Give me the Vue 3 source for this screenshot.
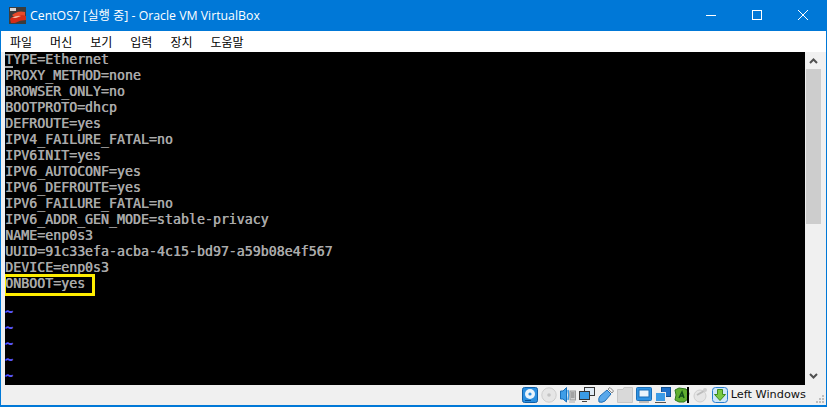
<script setup>
const lines = [
  'TYPE=Ethernet',
  'PROXY_METHOD=none',
  'BROWSER_ONLY=no',
  'BOOTPROTO=dhcp',
  'DEFROUTE=yes',
  'IPV4_FAILURE_FATAL=no',
  'IPV6INIT=yes',
  'IPV6_AUTOCONF=yes',
  'IPV6_DEFROUTE=yes',
  'IPV6_FAILURE_FATAL=no',
  'IPV6_ADDR_GEN_MODE=stable-privacy',
  'NAME=enp0s3',
  'UUID=91c33efa-acba-4c15-bd97-a59b08e4f567',
  'DEVICE=enp0s3',
  'ONBOOT=yes',
  '',
  '~', '~', '~', '~', '~'
]
const menus = ['파일', '머신', '보기', '입력', '장치', '도움말']
</script>

<template>
  <div class="window">
    <header class="titlebar">
      <svg class="logo" width="17" height="17" viewBox="0 0 17 17">
        <rect x="0" y="0" width="17" height="17" fill="#3c3c3c"/>
        <rect x="1" y="1" width="6" height="3" fill="#d8d8d8"/>
        <path d="M3 8 Q9 3 16 5 L16 9 Q10 8 6 11 Z" fill="#e84a2a"/>
        <path d="M1 12 Q3 9 6 10 Q12 7 17 9 L17 13 Q11 13 6 16 L2 16 Z" fill="#d42c18"/>
        <path d="M3 11 Q8 8 12 9 L7 11 Z" fill="#f4b8a0"/>
      </svg>
      <span class="title">CentOS7 [실행 중] - Oracle VM VirtualBox</span>
      <div class="controls">
        <svg width="12" height="12" viewBox="0 0 12 12"><path d="M1 6.5H11" stroke="#fff" fill="none"/></svg>
        <svg width="12" height="12" viewBox="0 0 12 12"><rect x="1.5" y="1.5" width="9" height="9" stroke="#fff" fill="none"/></svg>
        <svg width="12" height="12" viewBox="0 0 12 12"><path d="M1 1L11 11M11 1L1 11" stroke="#fff" fill="none"/></svg>
      </div>
    </header>
    <nav class="menubar">
      <span v-for="m in menus" :key="m" class="menu">{{ m }}</span>
    </nav>
    <main class="body">
      <div class="console">
        <div v-for="(l, i) in lines" :key="i" class="line" :class="{ tilde: l === '~' }">{{ l }}</div>
        <div class="cursor"></div>
        <div class="highlight"></div>
      </div>
      <div class="scrollbar">
        <div class="arrow">
          <svg width="9" height="7" viewBox="0 0 9 7"><path d="M1 6L4.5 2.5L8 6" stroke="#505050" stroke-width="2" fill="none"/></svg>
        </div>
        <div class="thumb"></div>
        <div class="spacer"></div>
        <div class="arrow">
          <svg width="9" height="7" viewBox="0 0 9 7"><path d="M1 1L4.5 4.5L8 1" stroke="#505050" stroke-width="2" fill="none"/></svg>
        </div>
      </div>
    </main>
    <footer class="status">
      <svg width="16" height="16" viewBox="0 0 16 16"><rect x=".5" y=".5" width="15" height="15" rx="2" fill="#2b8fe0" stroke="#0f5fa8"/><circle cx="8" cy="7" r="5" fill="#eaf4fc"/><circle cx="8" cy="7" r="1.6" fill="#2b8fe0"/><path d="M3 13.5H9" stroke="#0b4f90"/></svg>
      <svg width="16" height="16" viewBox="0 0 16 16"><circle cx="8" cy="8" r="7.2" fill="#e6e6e6" stroke="#cdcdcd"/><circle cx="8" cy="8" r="1.8" fill="#c4c4c4"/></svg>
      <svg width="16" height="16" viewBox="0 0 16 16"><path d="M.5 4H3L6.5 .5V15L3 12H.5Z" fill="#3f9ee8" stroke="#1a6fb8"/><path d="M8 3Q9.6 8 8 13" stroke="#3f9ee8" stroke-width="1.6" fill="none"/><rect x="10" y="4" width="5.5" height="9" fill="#cfcfcf" stroke="#999"/><path d="M11 6H14.5M11 8H14.5M11 10H14.5" stroke="#777"/><path d="M9 15H15" stroke="#aaa"/></svg>
      <svg width="16" height="16" viewBox="0 0 16 16"><rect x="5.5" y=".5" width="10" height="8" fill="#dfeaf4" stroke="#333"/><rect x=".5" y="4.5" width="10" height="8" fill="#3a9be6" stroke="#333"/><path d="M3 14.5H8" stroke="#444"/></svg>
      <svg width="16" height="16" viewBox="0 0 16 16"><path d="M1 15Q0 11 2 9L9 3L13 7L7 14Q4 16 1 15Z" fill="#5aa8ea" stroke="#1f70b8"/><path d="M10 2L12 .5L15.5 4L14 6Z" fill="#f2f2f2" stroke="#888"/></svg>
      <svg width="16" height="16" viewBox="0 0 16 16"><path d="M.5 2.5H6L7 .5H15.5V15.5H.5Z" fill="#d9d9d9" stroke="#c6c6c6"/></svg>
      <svg width="16" height="16" viewBox="0 0 16 16"><rect x=".5" y=".5" width="15" height="13" rx="1" fill="#2f93e4" stroke="#1a6fb8"/><rect x="3" y="3" width="10" height="7" fill="#eaf4fc" stroke="#1a6fb8"/><path d="M3 15H13" stroke="#888"/></svg>
      <svg width="16" height="16" viewBox="0 0 16 16"><rect x="6.5" y=".5" width="9" height="9" fill="#1f70c8" stroke="#0f4f90"/><rect x=".5" y="5.5" width="10" height="9" fill="#3a9be6" stroke="#eee"/><path d="M0 15.5H11" stroke="#555"/></svg>
      <span class="vt">
        <svg width="16" height="16" viewBox="0 0 16 16"><path d="M1 3L5 1L12 2L15 6L14 12L10 15H5L1 13L2 8Z" fill="#5fae2f" stroke="#2f7a1c"/><path d="M5 11L8 5L10 11M6 9H9" stroke="#12501a" stroke-width="1.5" fill="none"/></svg>
        <i class="vt-bar"></i>
      </span>
      <svg width="16" height="16" viewBox="0 0 16 16"><ellipse cx="7" cy="9" rx="6" ry="6" fill="#e6e6e6" stroke="#cfcfcf"/><path d="M4 8L11 4" stroke="#bdbdbd" stroke-width="2"/><circle cx="12" cy="3" r="2" fill="#cfcfcf"/></svg>
      <svg width="16" height="16" viewBox="0 0 16 16"><rect x=".5" y=".5" width="15" height="15" rx="3" fill="#cfe7fb" stroke="#2a7fd0"/><path d="M5.5 2.5H10.5V7.5H13.5L8 13.5L2.5 7.5H5.5Z" fill="#7ac943" stroke="#3d8a1f"/></svg>
      <span class="host">Left Windows</span>
      <svg class="grip" width="10" height="10" viewBox="0 0 10 10" fill="#bdbdbd"><rect x="7" y="1" width="2" height="2"/><rect x="4" y="4" width="2" height="2"/><rect x="7" y="4" width="2" height="2"/><rect x="1" y="7" width="2" height="2"/><rect x="4" y="7" width="2" height="2"/><rect x="7" y="7" width="2" height="2"/></svg>
    </footer>
  </div>
</template>

<style>
html, body { margin: 0; padding: 0; overflow: hidden; }
</style>

<style scoped>
.window {
  box-sizing: border-box;
  width: 827px;
  height: 407px;
  display: flex;
  flex-direction: column;
  background: #0078d7;
  border: 1px solid #0078d7;
  border-bottom-width: 2px;
  font-family: "Noto Sans CJK KR", "Liberation Sans", sans-serif;
}
.titlebar {
  height: 30px;
  display: flex;
  align-items: center;
  color: #fff;
  padding-left: 8px;
  flex: none;
}
.logo { margin-right: 4px; margin-bottom: 2px; }
.title { font: 12.3px/20px "Open Sans", "Noto Sans CJK KR", sans-serif; }
.controls {
  margin-left: auto;
  margin-bottom: 2px;
  display: flex;
  gap: 34px;
  padding-right: 17px;
}
.menubar {
  height: 21px;
  background: #fff;
  display: flex;
  gap: 18px;
  padding-left: 9px;
  align-items: center;
  font-size: 12px;
  color: #000;
  flex: none;
}
.body {
  flex: 1;
  min-height: 0;
  display: flex;
  background: #f0f0f0;
  padding-left: 4px;
}
.console {
  position: relative;
  flex: 1;
  background: #000;
  color: #aaa;
  overflow: hidden;
  font-family: "DejaVu Sans Mono", monospace;
  font-size: 13.28px;
  line-height: 16px;
  text-shadow: 0.5px 0 #aaa;
}
.line { height: 16px; white-space: pre; }
.tilde {
  color: #5555ff;
  font-weight: bold;
  height: 8px;
  line-height: 8px;
  margin-bottom: 8px;
  text-shadow: 0.5px 0 #5555ff;
}
.cursor {
  position: absolute;
  left: 0;
  top: 14px;
  width: 8px;
  height: 2px;
  background: #aaa;
}
.highlight {
  position: absolute;
  left: -2px;
  top: 222px;
  width: 86px;
  height: 16px;
  border: 3px solid #ffee00;
}
.scrollbar {
  flex: none;
  width: 15px;
  padding: 0 5px 0 1px;
  display: flex;
  flex-direction: column;
}
.arrow {
  height: 17px;
  flex: none;
  display: flex;
  align-items: center;
  justify-content: center;
}
.thumb { height: 155px; flex: none; background: #cdcdcd; }
.spacer { flex: 1; }
.status {
  height: 20px;
  background: #f0f0f0;
  flex: none;
  display: flex;
  align-items: center;
  justify-content: flex-end;
  gap: 3px;
  position: relative;
  padding-right: 20px;
}
.vt { display: flex; align-items: center; }
.vt-bar { display: block; width: 2px; height: 16px; background: #000; margin-left: -3px; margin-right: 1px; }
.host {
  font: 11.3px/16px "DejaVu Sans", sans-serif;
  color: #111;
}
.grip { position: absolute; right: 1px; bottom: 1px; }
</style>
